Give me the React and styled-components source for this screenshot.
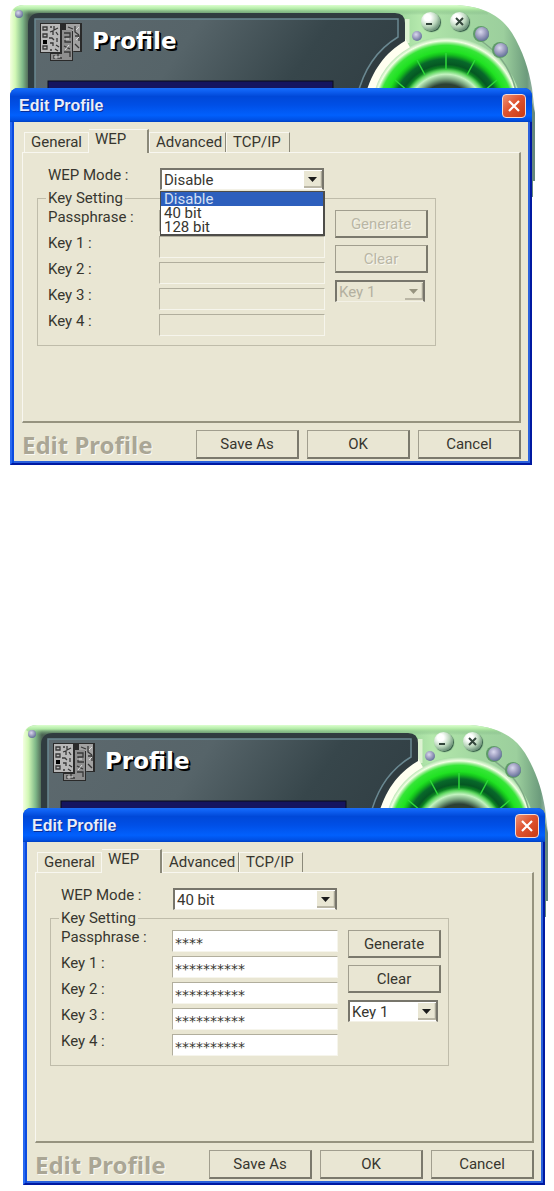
import React from 'react'
import styled, { createGlobalStyle } from 'styled-components'

const GlobalStyle = createGlobalStyle`
  * {
    box-sizing: border-box;
  }

  body {
    margin: 0;
    background: #fff;
    color: #37362f;
    font-family: Roboto, "Liberation Sans", sans-serif;
    font-size: 15px;
    line-height: 14px;
  }

  button, input, select {
    font: inherit;
    color: inherit;
    border-radius: 0;
  }
`;

const Page = styled.main`
  display: flex;
  flex-direction: column;
  gap: 260px;
  padding: 5px 9px 5px 10px;
`;

const Scene = styled.section`
  position: relative;
  margin-left: ${props => props.$shifted ? '13px' : '0'};
  margin-right: ${props => props.$shifted ? '0' : '13px'};
`;

/* the application skin runs on behind the dialog */
const Skin = styled.svg`
  position: absolute;
  top: 0;
  left: 0;
  width: calc(100% + 4px);
  height: 192px;
`;

const SkinHeader = styled.header`
  position: relative;
  display: flex;
  align-items: flex-start;
  height: 83px;
  padding: 7px 63px 0 30px;
`;

const BoardIcon = styled.svg`
  width: 42px;
  height: 40px;
  margin-top: 11px;
`;

const SkinTitle = styled.h1`
  margin: 15px 0 0 10px;
  color: #fff;
  font-family: "DejaVu Sans", sans-serif;
  font-size: 23px;
  font-weight: bold;
  line-height: 28px;
  text-shadow: 1px 1px 0 #000, 2px 2px 0 #000;
`;

const SkinButtons = styled.div`
  display: flex;
  gap: 10px;
  margin-left: auto;
`;

const RoundButton = styled.button`
  width: 19px;
  height: 19px;
  padding: 0;
  border: 0;
  border-radius: 50%;
  background: radial-gradient(circle at 35% 30%, #fff 0 18%, #b9d6bb 50%, #4e7560 85%);
  box-shadow: 1px 1px 1px #2f5543;

  svg {
    display: block;
  }
`;

const Dialog = styled.div`
  position: relative;
  border-radius: 8px 8px 0 0;
  background: #0831d9;
`;

const TitleBar = styled.div`
  display: flex;
  align-items: center;
  justify-content: space-between;
  height: 34px;
  padding: 2px 6px 0 9px;
  border-radius: 8px 8px 0 0;
  background: linear-gradient(#1c6df2 0, #0f62f4 8%, #0048d8 25%, #004fe6 50%, #0160fd 80%, #0050e4 94%, #0040c0);
`;

const DialogTitle = styled.h2`
  margin: 0;
  color: #e9edfb;
  font-family: "Liberation Sans", sans-serif;
  font-size: 16px;
  font-weight: bold;
  line-height: 20px;
  text-shadow: 1px 1px 0 #0a2f96;
`;

const CloseButton = styled.button`
  display: flex;
  align-items: center;
  justify-content: center;
  width: 24px;
  height: 24px;
  padding: 0;
  border: 1px solid #f4d9d6;
  border-radius: 4px;
  background: linear-gradient(135deg, #ec9275, #df5431 45%, #c93a12);
`;

const Body = styled.div`
  padding: 7px 9px 4px 10px;
  border: solid #0019a1;
  border-width: 0 2px 2px;
  border-left-color: #2a6af0;
  background: #e9e6d3;
  box-shadow: inset 2px 0 #0b4be0, inset -2px -2px #2b61dc;
`;

const Tabs = styled.div`
  display: flex;
  align-items: flex-end;
  height: 23px;
  padding-left: 2px;
`;

const Tab = styled.button`
  width: ${props => props.$width};
  height: ${props => props.$active ? '24px' : '20px'};
  margin-bottom: ${props => props.$active ? '-1px' : '0'};
  padding: ${props => props.$active ? '0 6px 6px' : '0 6px 1px'};
  border: solid #f8f7f0;
  border-width: ${props => props.$active ? '1px 2px 0 0' : '1px 1px 0'};
  border-right-color: ${props => props.$light ? '#f8f7f0' : '#8b8979'};
  background: #e9e6d3;
  text-align: left;
  white-space: nowrap;
  z-index: 1;
`;

const Panel = styled.div`
  height: 271px;
  padding: 15px 83px 0 14px;
  border: solid #f8f7f0;
  border-width: 1px 2px 2px 1px;
  border-right-color: #96937f;
  border-bottom-color: #96937f;
`;

const ModeRow = styled.div`
  display: flex;
  padding-left: 11px;
`;

const Label = styled.label`
  flex: none;
  width: ${props => props.$wide ? '112px' : '111px'};
  white-space: nowrap;
`;

const SelectBox = styled.div`
  position: relative;
  display: grid;
  width: ${props => props.$width};
  height: 22px;

  select, svg {
    grid-area: 1 / 1;
  }

  svg {
    place-self: center end;
    margin-right: 2px;
    pointer-events: none;
  }
`;

const Select = styled.select`
  appearance: none;
  width: 100%;
  height: 22px;
  padding: 1px 20px 0 2px;
  border: solid #77756b;
  border-width: 2px 2px 1px;
  border-bottom-color: #f3f1e6;
  background: #fff;
  opacity: 1;

  &:disabled {
    background: #e9e6d3;
    color: #b3b0a0;
  }
`;

const OptionList = styled.ul`
  position: absolute;
  top: 23px;
  left: 0;
  right: -1px;
  z-index: 2;
  margin: 0;
  padding: 0;
  border: solid #4e4d49;
  border-width: 1px 2px 2px 1px;
  background: #fff;
  list-style: none;
`;

const Option = styled.li`
  height: 14px;
  padding-left: 3px;
  background: ${props => props.$selected ? '#2d5fbd' : '#fff'};
  color: ${props => props.$selected ? '#d5e0f5' : 'inherit'};
`;

const KeySetting = styled.fieldset`
  display: flex;
  gap: 10px;
  min-width: 0;
  margin: 0;
  padding: 4px 7px 9px 10px;
  border: 1px solid #bfbcaa;
`;

const Legend = styled.legend`
  margin-left: -2px;
  padding: 0 2px;
  line-height: 16px;
`;

const Keys = styled.div`
  display: grid;
  grid-template-columns: minmax(0, 1fr);
  flex: 1;
  gap: 4px;
  min-width: 0;
`;

const KeyRow = styled.div`
  display: flex;
`;

const KeyInput = styled.input`
  flex: 1;
  width: 0;
  min-width: 0;
  height: 22px;
  padding: 4px 2px 0;
  border: 1px solid #b1ae9d;
  border-right-color: #f6f5ec;
  border-bottom-color: #f6f5ec;
  background: #fff;
  font-family: "DejaVu Sans", sans-serif;
  font-size: 14px;

  &:disabled {
    background: #e9e6d3;
  }
`;

const KeyActions = styled.div`
  display: flex;
  flex: none;
  flex-direction: column;
  gap: 7px;
  width: 93px;
`;

const Button = styled.button`
  height: ${props => props.$large ? '29px' : '28px'};
  padding: 0;
  border: solid #a19e8e;
  border-width: 1px 2px 2px 1px;
  border-right-color: #7b796c;
  border-bottom-color: #7b796c;
  background: #e9e6d3;

  &:disabled {
    color: #b9b6a5;
    text-shadow: 1px 1px 0 #f8f7f0;
  }
`;

const Footer = styled.footer`
  display: flex;
  align-items: center;
  justify-content: space-between;
  padding-top: 7px;
`;

const FooterTitle = styled.strong`
  color: #aaa695;
  font-family: "Noto Sans", sans-serif;
  font-size: 24px;
  line-height: 28px;
  text-shadow: 1px 1px 0 #fbfaf5;
`;

const FooterButtons = styled.div`
  display: grid;
  grid-template-columns: repeat(3, 103px);
  gap: 8px;
`;

function SkinDrawing({ id }) {
  const ref = name => `url(#${id}-${name})`;
  return (
    <Skin viewBox="0 0 526 192" preserveAspectRatio="none" aria-hidden="true">
      <defs>
        <linearGradient id={`${id}-shell`} x1="0" y1="0" x2="1" y2="0">
          <stop offset="0" stopColor="#f4ffe0" />
          <stop offset="0.01" stopColor="#d2f8b6" />
          <stop offset="0.024" stopColor="#7fb888" />
          <stop offset="0.036" stopColor="#4c6353" />
          <stop offset="0.7" stopColor="#8cc88f" />
          <stop offset="0.78" stopColor="#b4e8ac" />
          <stop offset="0.86" stopColor="#a3d8a1" />
          <stop offset="0.94" stopColor="#9ccf9d" />
          <stop offset="0.985" stopColor="#6c9b7c" />
          <stop offset="1" stopColor="#a9bdb8" />
        </linearGradient>
        <linearGradient id={`${id}-top`} x1="0" y1="0" x2="0" y2="1">
          <stop offset="0" stopColor="#dcffcf" />
          <stop offset="0.4" stopColor="#b0eaa4" />
          <stop offset="1" stopColor="#6da477" stopOpacity="0" />
        </linearGradient>
        <linearGradient id={`${id}-plate`} x1="0" y1="0" x2="1" y2="0.15">
          <stop offset="0" stopColor="#5d696e" />
          <stop offset="0.45" stopColor="#566469" />
          <stop offset="0.8" stopColor="#37464b" />
          <stop offset="1" stopColor="#334146" />
        </linearGradient>
        <radialGradient id={`${id}-dot`} cx="0.4" cy="0.35" r="0.65">
          <stop offset="0" stopColor="#d9d9ee" />
          <stop offset="0.5" stopColor="#a3a3c4" />
          <stop offset="1" stopColor="#66749a" />
        </radialGradient>
        <radialGradient id={`${id}-dial`} gradientUnits="userSpaceOnUse" cx="436" cy="108" r="76">
          <stop offset="0.38" stopColor="#2c4034" />
          <stop offset="0.45" stopColor="#7da982" />
          <stop offset="0.51" stopColor="#c3f3c0" />
          <stop offset="0.56" stopColor="#5fd660" />
          <stop offset="0.6" stopColor="#0c8422" />
          <stop offset="0.64" stopColor="#055723" />
          <stop offset="0.71" stopColor="#08682a" />
          <stop offset="0.77" stopColor="#14c01c" />
          <stop offset="0.81" stopColor="#20e222" />
          <stop offset="0.89" stopColor="#35e636" />
          <stop offset="0.92" stopColor="#8cec86" />
          <stop offset="0.95" stopColor="#f2ffe4" />
          <stop offset="1" stopColor="#a6dca4" />
        </radialGradient>
        <clipPath id={`${id}-clip`}>
          <rect width="522" height="92" />
        </clipPath>
      </defs>
      <path
        d="M0 14Q0 0 14 0H447C475 2 491 11 502 28C513 46 519 65 522 83L525 108V176H523V192H500V100H0Z"
        fill={ref('shell')}
      />
      <path d="M520 90L525 108V176H523V192H519Z" fill="#66887c" />
      <path d="M3 5Q7 0 14 0H447C460 1 470 3 478 8V10H10Z" fill={ref('top')} />
      <g clipPath={ref('clip')}>
        <circle cx="436" cy="108" r="76" fill={ref('dial')} />
        <path d="M397 37C376 49 362 67 357 92" fill="none" stroke="#fffff0" strokeWidth="12" />
        <path d="M397 14V38" stroke="#fffff0" strokeWidth="5" opacity="0.6" />
        <path d="M18 20Q18 8 30 8H385Q395 8 395 18V36C375 48 362 65 355 92H18Z" fill="#303c40" />
        <path
          d="M25 14H388V32C368 44 354 62 347 92H25Z"
          fill={ref('plate')}
          stroke="#6a8891"
          strokeWidth="1.5"
        />
        <rect x="38" y="76" width="285" height="20" fill="#15155f" stroke="#0a0c18" />
        <path
          d="M436 48V65M407 55L415 70M465 55L457 70M385 75L398 86M487 75L474 86"
          stroke="#2fd83a"
          strokeWidth="1.5"
        />
        <path d="M470 35C486 46 500 60 506 86" fill="none" stroke="#7fab86" strokeWidth="1.5" />
      </g>
      <circle cx="9" cy="9" r="4" fill={ref('dot')} />
      <circle cx="407" cy="31" r="5" fill={ref('dot')} />
      <circle cx="471" cy="29" r="8" fill="#5e9a68" />
      <circle cx="472" cy="29" r="7" fill={ref('dot')} />
      <circle cx="490" cy="45" r="8" fill="#5e9a68" />
      <circle cx="491" cy="45" r="7" fill={ref('dot')} />
    </Skin>
  );
}

function Board() {
  return (
    <BoardIcon viewBox="0 0 42 40" aria-hidden="true">
      <path d="M12 12H33V38H10V30H0V0H42V29H34" fill="#2a2a2a" />
      <path d="M1 1H20V29H1Z" fill="#b9b9b9" />
      <path d="M26 1H40V28H33V8H26Z" fill="#a2a2a2" />
      <path d="M22 7H32V37H11V31H22Z" fill="#8e8e8e" />
      <path
        d="M3 4H7V7H3ZM3 11H7V14H3ZM3 23H7V26H3ZM10 4H12M14 3V7L18 5M10 9L13 8V12M16 9L18 12M9 15H12L14 17M17 15V19M10 20H13V23M16 22L19 24M10 27H12M15 26L18 28M24 10H30V14H25V19H31M24 23L30 26M24 29H30V34M14 32V36M18 31V35H22M28 4L33 6M35 3V9L39 12M35 13H39V18M35 21L39 25"
        fill="none"
        stroke="#383838"
        strokeWidth="1.3"
      />
      <path d="M3 17H7V21H3Z" fill="#000" />
      <path d="M24 16H29M25 27L29 22M14 34H20M36 7L39 4M36 17L39 14" stroke="#ddd" />
    </BoardIcon>
  );
}

function Arrow({ disabled }) {
  return (
    <svg width="18" height="17" viewBox="0 0 18 17" aria-hidden="true">
      <path d="M0 0H18V17H0Z" fill="#e9e6d3" />
      <path d="M0 16H17.5V0" fill="none" stroke="#aaa797" strokeWidth="1.5" />
      <path d="M4 6H13L8.500 11Z" fill={disabled ? '#96937f' : '#1b1b1b'} />
    </svg>
  );
}

const MODES = ['Disable', '40 bit', '128 bit'];

function ProfileScene({ id, mode, open, values, shifted }) {
  const disabled = mode === 'Disable';
  const fields = ['Passphrase :', 'Key 1 :', 'Key 2 :', 'Key 3 :', 'Key 4 :'];

  return (
    <Scene $shifted={shifted}>
      <SkinDrawing id={id} />
      <SkinHeader>
        <Board />
        <SkinTitle>Profile</SkinTitle>
        <SkinButtons>
          <RoundButton type="button" aria-label="Minimize">
            <svg viewBox="0 0 19 19"><path d="M5 12H11" stroke="#34463c" strokeWidth="2" /></svg>
          </RoundButton>
          <RoundButton type="button" aria-label="Exit">
            <svg viewBox="0 0 19 19"><path d="M6 6L13 13M13 6L6 13" stroke="#34463c" strokeWidth="2" /></svg>
          </RoundButton>
        </SkinButtons>
      </SkinHeader>
      <Dialog role="dialog" aria-labelledby={`${id}-title`}>
        <TitleBar>
          <DialogTitle id={`${id}-title`}>Edit Profile</DialogTitle>
          <CloseButton type="button" aria-label="Close">
            <svg width="14" height="14" viewBox="0 0 14 14">
              <path d="M2 2L12 12M12 2L2 12" stroke="#fff" strokeWidth="2.200" />
            </svg>
          </CloseButton>
        </TitleBar>
        <Body>
          <Tabs role="tablist">
            <Tab type="button" role="tab" $width="65px" $light>General</Tab>
            <Tab type="button" role="tab" aria-selected="true" $width="60px" $active>WEP</Tab>
            <Tab type="button" role="tab" $width="77px">Advanced</Tab>
            <Tab type="button" role="tab" $width="64px">TCP/IP</Tab>
          </Tabs>
          <Panel role="tabpanel">
            <ModeRow>
              <Label $wide htmlFor={`${id}-mode`}>WEP Mode :</Label>
              <SelectBox $width="164px">
                <Select id={`${id}-mode`} defaultValue={mode}>
                  {MODES.map(name => <option key={name}>{name}</option>)}
                </Select>
                <Arrow />
                {open && (
                  <OptionList role="listbox" aria-label="WEP Mode">
                    {MODES.map(name => (
                      <Option key={name} role="option" aria-selected={name === mode} $selected={name === mode}>
                        {name}
                      </Option>
                    ))}
                  </OptionList>
                )}
              </SelectBox>
            </ModeRow>
            <KeySetting>
              <Legend>Key Setting</Legend>
              <Keys>
                {fields.map((field, i) => (
                  <KeyRow key={field}>
                    <Label htmlFor={`${id}-field-${i}`}>{field}</Label>
                    <KeyInput id={`${id}-field-${i}`} defaultValue={values[i]} disabled={disabled} />
                  </KeyRow>
                ))}
              </Keys>
              <KeyActions>
                <Button type="button" disabled={disabled}>Generate</Button>
                <Button type="button" disabled={disabled}>Clear</Button>
                <SelectBox $width="90px">
                  <Select aria-label="Default key" disabled={disabled}>
                    <option>Key 1</option>
                    <option>Key 2</option>
                    <option>Key 3</option>
                    <option>Key 4</option>
                  </Select>
                  <Arrow disabled={disabled} />
                </SelectBox>
              </KeyActions>
            </KeySetting>
          </Panel>
          <Footer>
            <FooterTitle>Edit Profile</FooterTitle>
            <FooterButtons>
              <Button type="button" $large>Save As</Button>
              <Button type="button" $large>OK</Button>
              <Button type="button" $large>Cancel</Button>
            </FooterButtons>
          </Footer>
        </Body>
      </Dialog>
    </Scene>
  );
}

const NO_KEYS = ['', '', '', '', ''];
const KEYS = ['****', '**********', '**********', '**********', '**********'];

export default function App() {
  return (
    <Page>
      <GlobalStyle />
      <ProfileScene id="disabled" mode="Disable" open values={NO_KEYS} />
      <ProfileScene id="forty" mode="40 bit" values={KEYS} shifted />
    </Page>
  );
}
